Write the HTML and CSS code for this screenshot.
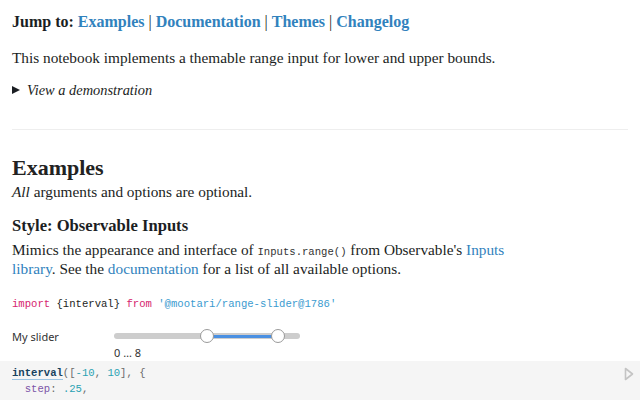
FILE: index.html
```html
<!DOCTYPE html>
<html>
<head>
<meta charset="utf-8">
<link rel="stylesheet" href="styles.css">
</head>
<body>
<div class="page">
  <p class="jump"><b>Jump to:</b> <a href="#">Examples</a> | <a href="#">Documentation</a> | <a href="#">Themes</a> | <a href="#">Changelog</a></p>
  <p class="para">This notebook implements a themable range input for lower and upper bounds.</p>
  <div class="details"><span class="tri"></span><em>View a demonstration</em></div>
  <hr class="rule">
  <h2 class="h2">Examples</h2>
  <p class="para sub"><em>All</em> arguments and options are optional.</p>
  <h3 class="h3">Style: Observable Inputs</h3>
  <p class="para tight narrow">Mimics the appearance and interface of <span class="inl">Inputs.range()</span> from Observable's <a class="lk" href="#">Inputs library</a>. See the <a class="lk" href="#">documentation</a> for a list of all available options.</p>
  <pre class="imp"><span class="kw">import</span> {interval} <span class="kw">from</span> <span class="str">'@mootari/range-slider@1786'</span></pre>
  <div class="slider-row">
    <span class="slabel">My slider</span>
    <div class="track">
      <div class="fill" style="left:50%;width:38%"></div>
      <span class="knob" style="left:50%"></span>
      <span class="knob" style="left:88%"></span>
    </div>
  </div>
  <div class="sval">0 … 8</div>
</div>
<div class="cell">
  <pre class="code"><span class="fn">interval</span><span class="pn">([</span><span class="num">-10</span><span class="pn">, </span><span class="num">10</span><span class="pn">], {</span>
  <span class="prop">step</span><span class="pn">:</span> <span class="num">.25</span><span class="pn">,</span></pre>
  <svg class="play" width="10" height="14" viewBox="0 0 10 14"><path d="M1.5 1.5 L8.5 7 L1.5 12.5 Z" fill="none" stroke="#c4c4c4" stroke-width="1.6" stroke-linejoin="round"/></svg>
</div>
</body>
</html>
```
FILE: styles.css
```css
html, body { margin: 0; padding: 0; background: #fff; }
body { font-family: "Liberation Serif", "DejaVu Serif", serif; color: #1b1e23; width: 640px; height: 400px; overflow: hidden; }
.page { padding: 0 12px; }
a { color: #3182bd; text-decoration: none; }
.jump { margin: 0; padding-top: 12px; font-size: 16px; line-height: 20px; }
.jump a { font-weight: bold; }
.para { margin: 16px 0 0; font-size: 15.3px; line-height: 19px; }
.para.sub { margin-top: 1px; }
.para.tight { margin-top: 4px; }
.narrow { max-width: 505px; }
.details { margin-top: 13px; font-size: 14.4px; line-height: 20px; display: flex; align-items: center; }
.tri { width: 0; height: 0; border-left: 8px solid #1b1e23; border-top: 4.5px solid transparent; border-bottom: 4.5px solid transparent; margin-right: 7px; }
.rule { margin: 29px 0 0; border: 0; border-top: 1px solid #eee; }
.h2 { margin: 25px 0 0; font-size: 22px; line-height: 26px; font-weight: bold; color: #222; }
.h3 { margin: 15px 0 0; font-size: 16.6px; line-height: 20px; font-weight: bold; }
.inl { font-family: "Liberation Mono", "DejaVu Sans Mono", monospace; font-size: 10.6px; line-height: 1; color: #333; }
.lk { font-weight: normal; }
.imp { margin: 18px 0 0; font-family: "Liberation Mono", "DejaVu Sans Mono", monospace; font-size: 10.6px; line-height: 16px; color: #1b1e23; }
.kw { color: #d6246e; }
.str { color: #3b9bd0; }
.slider-row { display: flex; align-items: center; margin-top: 17px; height: 14px; font-family: "Noto Sans", sans-serif; font-size: 11px; color: #333; }
.slabel { width: 102px; }
.track { position: relative; width: 186px; height: 6px; border-radius: 3px; background: #cdcdcd; }
.fill { position: absolute; top: 1.5px; height: 3px; background: #4a90e2; }
.knob { position: absolute; top: -4px; width: 12px; height: 12px; margin-left: -7px; border-radius: 50%; background: #fff; border: 1px solid #9a9a9a; }
.sval { margin: 3px 0 0 102px; font-family: "Noto Sans", sans-serif; font-size: 11px; line-height: 13px; color: #333; }
.cell { position: relative; margin-top: 2px; background: #f5f5f5; padding: 4px 12px 0; height: 40px; }
.code { margin: 0; font-family: "Liberation Mono", "DejaVu Sans Mono", monospace; font-size: 10.6px; line-height: 16px; color: #444; }
.fn { color: #18425e; font-weight: bold; border-bottom: 1px solid #9cc4e2; }
.pn { color: #6b6b6b; }
.num { color: #2ba2b3; }
.prop { color: #7c56a8; }
.play { position: absolute; right: 6px; top: 6px; }
```
